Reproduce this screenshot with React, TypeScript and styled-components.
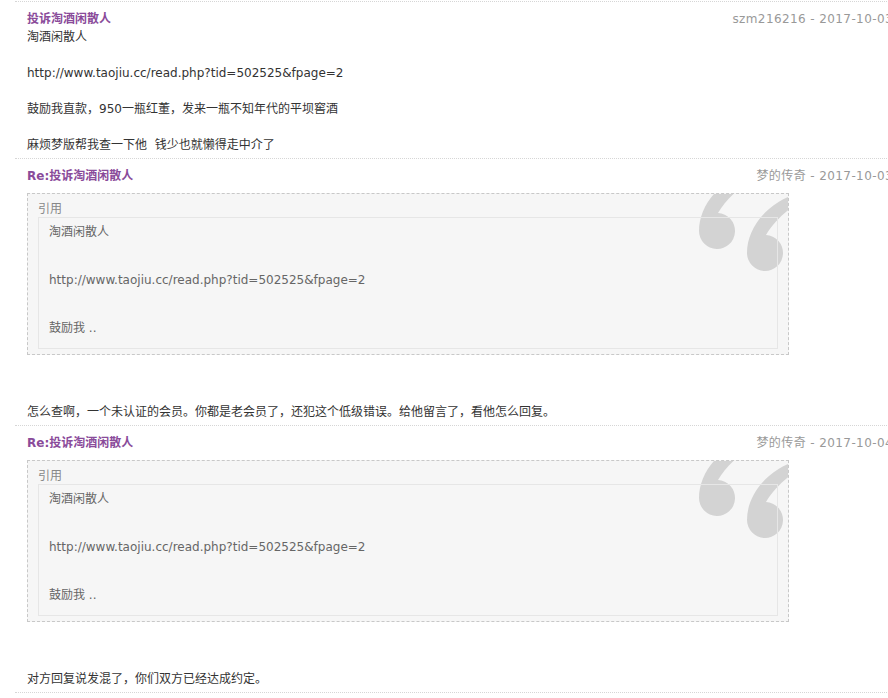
import styled, { createGlobalStyle } from "styled-components";

const GlobalStyle = createGlobalStyle`
  html, body {
    margin: 0;
    padding: 0;
    background: #fff;
    overflow: hidden;
  }
  body {
    font-family: "DejaVu Sans", "Noto Sans CJK SC", sans-serif;
    font-size: 12px;
    color: #333;
  }
`;

const Page = styled.div`
  width: 878px;
  padding: 1px 0 0 15px;
`;

const Post = styled.div`
  border-top: 1px dotted #d6d6d6;
  padding: 8px 0 4px 12px;

  &:last-child {
    border-bottom: 1px dotted #d6d6d6;
  }
`;

const PostHead = styled.div`
  display: flex;
  justify-content: space-between;
  align-items: center;
  height: 18px;
  line-height: 18px;
`;

const Title = styled.a`
  color: #8a4b9a;
  font-weight: bold;
  text-decoration: none;
`;

const Meta = styled.span`
  color: #999;
  letter-spacing: 0.4px;
  white-space: nowrap;
`;

const Line = styled.div`
  min-height: 18px;
  line-height: 18px;
  white-space: pre;
`;

const Quote = styled.div`
  position: relative;
  overflow: hidden;
  box-sizing: border-box;
  width: 762px;
  margin: 8px 0 48px;
  padding: 7px 10px 5px;
  border: 1px dashed #c8c8c8;
  background: #f6f6f6;
`;

const QuoteLabel = styled.div`
  position: relative;
  height: 16px;
  line-height: 16px;
  color: #888;
`;

const QuoteBody = styled.div`
  position: relative;
  border: 1px solid #e6e6e6;
  padding: 2px 10px 8px;
  color: #666;
`;

const QuoteLine = styled.div`
  height: 24px;
  line-height: 24px;
`;

const QuoteMarkSvg = styled.svg`
  position: absolute;
  top: 0;
  right: 0;
`;

const comma =
  "M -18,0 C -18,-16 -10,-32 4,-44 C 12,-51 20,-55 28,-58 L 34,-50 C 22,-44 8,-30 1,-18 A 18 18 0 1 1 -18,0 Z";

const QuoteMark = () => (
  <QuoteMarkSvg width="100" height="80" viewBox="0 0 100 80">
    <path d={comma} transform="translate(29 37)" fill="#d3d3d3" />
    <path d={comma} transform="translate(77 59)" fill="#d3d3d3" />
  </QuoteMarkSvg>
);

const quoted = ["淘酒闲散人", "", "http://www.taojiu.cc/read.php?tid=502525&fpage=2", "", "鼓励我 .."];

type PostData = {
  title: string;
  author: string;
  date: string;
  quote?: string[];
  lines: string[];
};

const posts: PostData[] = [
  {
    title: "投诉淘酒闲散人",
    author: "szm216216",
    date: "2017-10-03",
    lines: [
      "淘酒闲散人",
      "",
      "http://www.taojiu.cc/read.php?tid=502525&fpage=2",
      "",
      "鼓励我直款，950一瓶红董，发来一瓶不知年代的平坝窖酒",
      "",
      "麻烦梦版帮我查一下他\u00a0\u00a0钱少也就懒得走中介了",
    ],
  },
  {
    title: "Re:投诉淘酒闲散人",
    author: "梦的传奇",
    date: "2017-10-03",
    quote: quoted,
    lines: ["怎么查啊，一个未认证的会员。你都是老会员了，还犯这个低级错误。给他留言了，看他怎么回复。"],
  },
  {
    title: "Re:投诉淘酒闲散人",
    author: "梦的传奇",
    date: "2017-10-04",
    quote: quoted,
    lines: ["对方回复说发混了，你们双方已经达成约定。"],
  },
];

const App = () => (
  <>
    <GlobalStyle />
    <Page>
      {posts.map((post, i) => (
        <Post key={i}>
          <PostHead>
            <Title href="#">{post.title}</Title>
            <Meta>
              {post.author} - {post.date}
            </Meta>
          </PostHead>
          {post.quote && (
            <Quote>
              <QuoteMark />
              <QuoteLabel>引用</QuoteLabel>
              <QuoteBody>
                {post.quote.map((q, j) => (
                  <QuoteLine key={j}>{q}</QuoteLine>
                ))}
              </QuoteBody>
            </Quote>
          )}
          {post.lines.map((l, j) => (
            <Line key={j}>{l}</Line>
          ))}
        </Post>
      ))}
    </Page>
  </>
);

export default App;
